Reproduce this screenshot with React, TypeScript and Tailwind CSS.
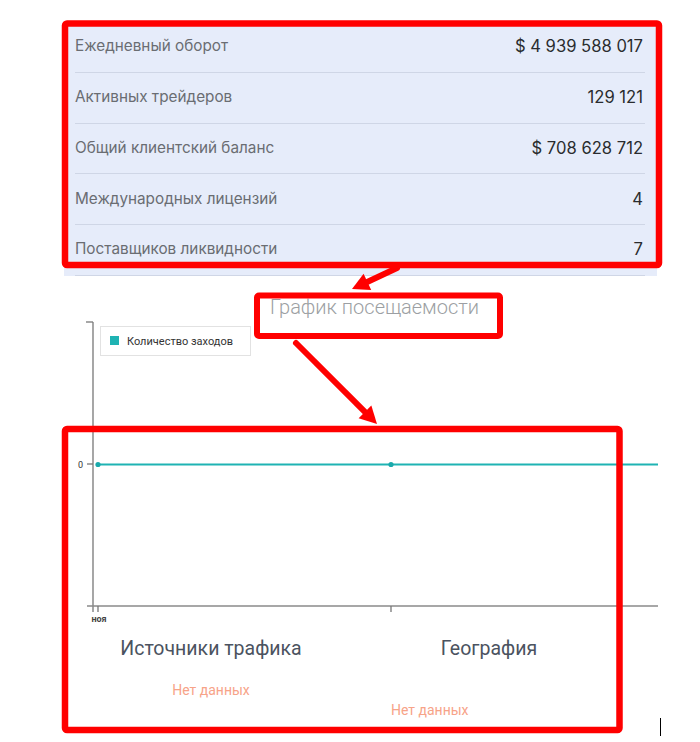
import React from 'react';

const stats = [
  { label: 'Ежедневный оборот', value: '$ 4 939 588 017' },
  { label: 'Активных трейдеров', value: '129 121' },
  { label: 'Общий клиентский баланс', value: '$ 708 628 712' },
  { label: 'Международных лицензий', value: '4' },
  { label: 'Поставщиков ликвидности', value: '7' },
];

function Arrow({ x1, y1, x2, y2 }: { x1: number; y1: number; x2: number; y2: number }) {
  const dx = x2 - x1;
  const dy = y2 - y1;
  const len = Math.hypot(dx, dy);
  const ux = dx / len;
  const uy = dy / len;
  const head = 17;
  const half = 9;
  const bx = x2 - ux * head;
  const by = y2 - uy * head;
  const pts = `${x2},${y2} ${bx - uy * half},${by + ux * half} ${bx + uy * half},${by - ux * half}`;
  return (
    <g>
      <line x1={x1} y1={y1} x2={bx + ux * 2} y2={by + uy * 2} stroke="#ff0000" strokeWidth={6} strokeLinecap="round" />
      <polygon points={pts} fill="#ff0000" />
    </g>
  );
}

function Chart() {
  return (
    <svg width={700} height={310} className="block" style={{ fontFamily: 'Roboto, sans-serif' }}>
      {/* legend */}
      <rect x={100.5} y={7.5} width={150} height={29} fill="#fff" stroke="#e2e2e2" />
      <rect x={110} y={17} width={9} height={9} fill="#1fb3b3" />
      <text x={127} y={25.5} fontSize={11} fill="#333">Количество заходов</text>

      {/* y axis */}
      <line x1={93} y1={3} x2={93} y2={293} stroke="#777" strokeWidth={1.3} />
      <line x1={86} y1={3} x2={93} y2={3} stroke="#777" strokeWidth={1.3} />
      <line x1={87} y1={145} x2={93} y2={145} stroke="#777" strokeWidth={1.3} />
      <text x={83} y={148.5} fontSize={9} fill="#333" textAnchor="end">0</text>

      {/* x axis */}
      <line x1={87} y1={287} x2={658} y2={287} stroke="#8a8a8a" strokeWidth={1.6} />
      <line x1={98} y1={287} x2={98} y2={293} stroke="#777" strokeWidth={1.3} />
      <line x1={391} y1={287} x2={391} y2={293} stroke="#777" strokeWidth={1.3} />
      <text x={99} y={303} fontSize={9} fontWeight={700} fill="#444" textAnchor="middle">ноя</text>

      {/* data */}
      <line x1={98} y1={145.5} x2={658} y2={145.5} stroke="#1fb3b3" strokeWidth={2} />
      <circle cx={98} cy={145.5} r={2.6} fill="#1aa9ab" />
      <circle cx={391} cy={145.5} r={2.6} fill="#1aa9ab" />
    </svg>
  );
}

export default function App() {
  return (
    <div className="relative w-[700px] h-[742px] bg-white overflow-hidden" style={{ fontFamily: 'Roboto, "Noto Sans", sans-serif' }}>
      <div className="pt-[22px]" style={{ fontFamily: 'Inter, Roboto, sans-serif' }}>
        <div className="ml-[64px] w-[593px] bg-[#e6ecfa] pl-[11px] pr-[12px]">
          {stats.map(s => (
            <div key={s.label} className="h-[50.75px] border-b border-[#cfd6e6] flex items-center justify-between pr-[2px]">
              <span className="text-[15.3px] text-[#6a6d72]">{s.label}</span>
              <span className="text-[16.6px] text-[#2a2c2e]">{s.value}</span>
            </div>
          ))}
        </div>
      </div>

      <div className="mt-[19px] pl-[270px] text-[20px] font-light leading-6 text-[#9c9fa3]">График посещаемости</div>

      <Chart />

      <div className="flex ml-[70px] mt-[8px]">
        <div className="w-[282px] flex flex-col items-center">
          <div className="text-[19.5px] text-[#4b5360] leading-6">Источники трафика</div>
          <div className="mt-[19px] text-[14px] text-[#f7a388]">Нет данных</div>
        </div>
        <div className="w-[274px] flex flex-col">
          <div className="text-[19.5px] text-[#4b5360] leading-6 text-center">География</div>
          <div className="mt-[39px] pl-[39px] text-[14px] text-[#f7a388]">Нет данных</div>
        </div>
      </div>

      {/* annotations */}
      <svg className="absolute inset-0 pointer-events-none" width={700} height={742}>
        <rect x={65} y={23.5} width={594} height={241.5} rx={2} fill="none" stroke="#ff0000" strokeWidth={6.5} />
        <rect x={257} y={295.5} width={243} height={40.5} rx={2} fill="none" stroke="#ff0000" strokeWidth={6} />
        <rect x={65} y={429} width={554.5} height={301} rx={2} fill="none" stroke="#ff0000" strokeWidth={6.5} />
        <Arrow x1={397} y1={268} x2={352} y2={289} />
        <Arrow x1={296} y1={343} x2={377} y2={424} />
        <line x1={660.5} y1={718} x2={660.5} y2={736} stroke="#000" strokeWidth={1} />
      </svg>
    </div>
  );
}
